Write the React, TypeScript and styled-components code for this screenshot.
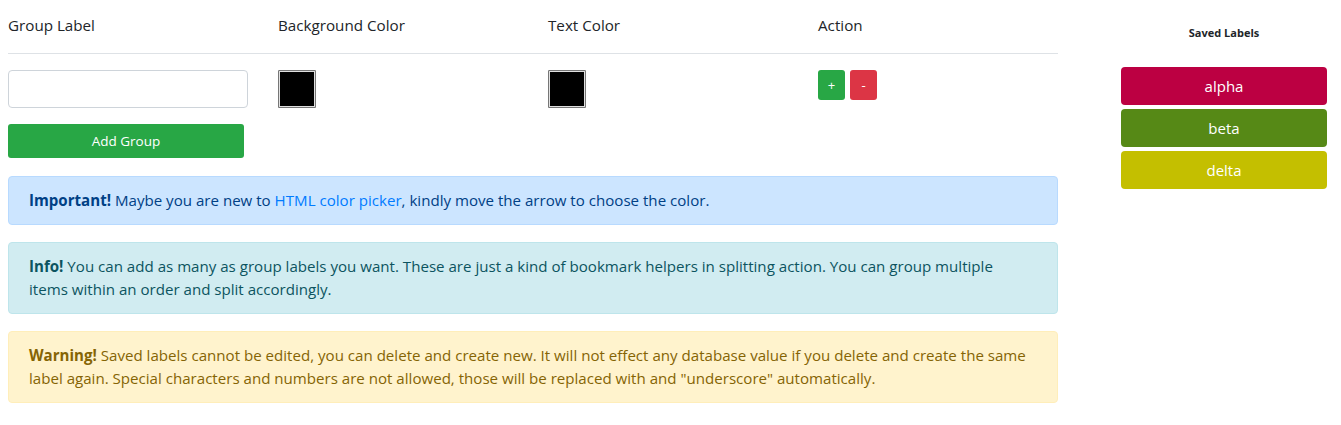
import styled, { createGlobalStyle } from 'styled-components';

const GlobalStyle = createGlobalStyle`
  body {
    margin: 0;
    padding: 0 8px;
    background: #fff;
    font-family: 'Open Sans', 'Noto Sans', sans-serif;
    color: #212529;
  }
  * { box-sizing: border-box; }
`;

const Page = styled.div`
  display: flex;
  align-items: flex-start;
`;

const Main = styled.div`
  width: 1050px;
  flex-shrink: 0;
`;

/* ── Form table ───────────────────────────────────────────────────── */
const Grid = styled.div`
  display: grid;
  grid-template-columns: 270px 270px 270px 1fr;
`;

const HeadCell = styled.div`
  font-size: 15.2px;
  line-height: 22px;
  padding: 14px 0 17px;
  border-bottom: 1px solid #dee2e6;
`;

const BodyCell = styled.div`
  padding-top: 16px;
  display: flex;
  flex-direction: column;
  align-items: flex-start;
`;

const TextInput = styled.input`
  width: 240px;
  height: 38px;
  border: 1px solid #ced4da;
  border-radius: 4px;
  padding: 6px 12px;
  font: inherit;
  outline: none;
`;

const AddButton = styled.button`
  margin-top: 16px;
  width: 236px;
  height: 34px;
  border: none;
  border-radius: 3px;
  background: #28a745;
  color: #fff;
  font-family: inherit;
  font-size: 13.5px;
  cursor: pointer;
`;

const Swatch = styled.div<{ $color: string }>`
  width: 38px;
  height: 38px;
  background: ${({ $color }) => $color};
  border: 1px solid #767676;
  outline: 1px solid #e0e0e0;
  outline-offset: -2px;
  border-radius: 1px;
`;

const Actions = styled.div`
  display: flex;
  gap: 5px;
`;

const SmallBtn = styled.button<{ $tone: 'add' | 'remove' }>`
  width: 27px;
  height: 30px;
  border: none;
  border-radius: 3px;
  padding: 0;
  color: #fff;
  font-family: inherit;
  font-size: 13px;
  background: ${({ $tone }) => ($tone === 'add' ? '#28a745' : '#dc3545')};
  cursor: pointer;
`;

/* ── Alerts ───────────────────────────────────────────────────────── */
const ALERT: Record<string, { bg: string; border: string; color: string }> = {
  primary: { bg: '#cce5ff', border: '#b8daff', color: '#004085' },
  info: { bg: '#d1ecf1', border: '#bee5eb', color: '#0c5460' },
  warning: { bg: '#fff3cd', border: '#ffeeba', color: '#856404' },
};

const Alerts = styled.div`
  margin-top: 18px;
  display: flex;
  flex-direction: column;
  gap: 17px;
`;

const Alert = styled.div<{ $kind: string }>`
  padding: 12px 20px;
  border: 1px solid ${({ $kind }) => ALERT[$kind].border};
  background: ${({ $kind }) => ALERT[$kind].bg};
  color: ${({ $kind }) => ALERT[$kind].color};
  border-radius: 4px;
  font-size: 15.1px;
  line-height: 23px;
`;

const Link = styled.a`
  color: #007bff;
  text-decoration: none;
`;

/* ── Saved labels ─────────────────────────────────────────────────── */
const Sidebar = styled.aside`
  width: 206px;
  margin-left: 63px;
  display: flex;
  flex-direction: column;
  gap: 4px;
`;

const SideTitle = styled.h6`
  margin: 26px 0 23px;
  text-align: center;
  font-size: 11px;
  font-weight: 700;
  line-height: 14px;
`;

const LabelChip = styled.button<{ $bg: string }>`
  height: 38px;
  border: none;
  border-radius: 4px;
  background: ${({ $bg }) => $bg};
  color: #fff;
  font-family: inherit;
  font-size: 15px;
  cursor: pointer;
`;

const savedLabels = [
  { name: 'alpha', color: '#bc0042' },
  { name: 'beta', color: '#568916' },
  { name: 'delta', color: '#c4bf00' },
];

export default function App() {
  return (
    <>
      <GlobalStyle />
      <Page>
        <Main>
          <Grid>
            <HeadCell>Group Label</HeadCell>
            <HeadCell>Background Color</HeadCell>
            <HeadCell>Text Color</HeadCell>
            <HeadCell>Action</HeadCell>
            <BodyCell>
              <TextInput type="text" />
              <AddButton>Add Group</AddButton>
            </BodyCell>
            <BodyCell>
              <Swatch $color="#000" />
            </BodyCell>
            <BodyCell>
              <Swatch $color="#000" />
            </BodyCell>
            <BodyCell>
              <Actions>
                <SmallBtn $tone="add">+</SmallBtn>
                <SmallBtn $tone="remove">-</SmallBtn>
              </Actions>
            </BodyCell>
          </Grid>
          <Alerts>
            <Alert $kind="primary">
              <strong>Important!</strong> Maybe you are new to{' '}
              <Link href="#">HTML color picker</Link>, kindly move the arrow to choose the color.
            </Alert>
            <Alert $kind="info">
              <strong>Info!</strong> You can add as many as group labels you want. These are just a
              kind of bookmark helpers in splitting action. You can group multiple
              <br />
              items within an order and split accordingly.
            </Alert>
            <Alert $kind="warning">
              <strong>Warning!</strong> Saved labels cannot be edited, you can delete and create new.
              It will not effect any database value if you delete and create the same label again.
              Special characters and numbers are not allowed, those will be replaced with and
              "underscore" automatically.
            </Alert>
          </Alerts>
        </Main>
        <Sidebar>
          <SideTitle>Saved Labels</SideTitle>
          {savedLabels.map(l => (
            <LabelChip key={l.name} $bg={l.color}>
              {l.name}
            </LabelChip>
          ))}
        </Sidebar>
      </Page>
    </>
  );
}
